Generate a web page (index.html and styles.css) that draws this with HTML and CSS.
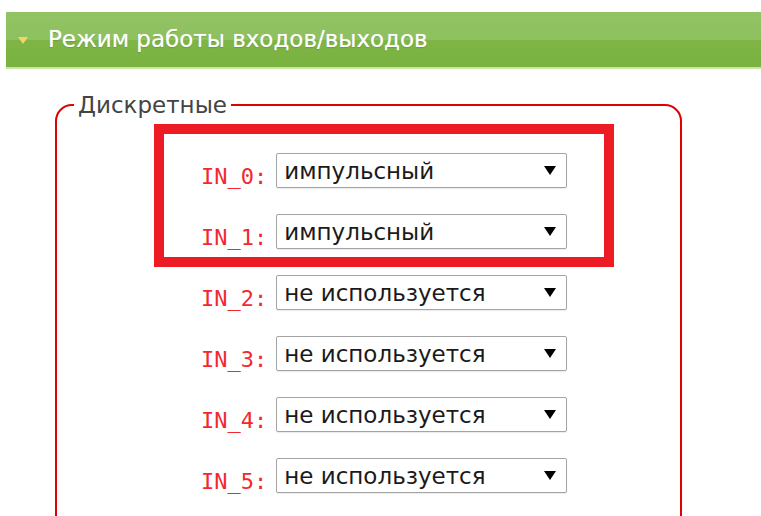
FILE: index.html
```html
<!DOCTYPE html>
<html lang="ru">
<head>
<meta charset="utf-8">
<title>Режим работы входов/выходов</title>
<link rel="stylesheet" href="styles.css">
</head>
<body>
<div class="panel-head">
  <span class="caret"></span>
  <h2 class="panel-title">Режим работы входов/выходов</h2>
</div>

<fieldset class="group">
  <legend class="group-title">Дискретные</legend>
  <div class="inputs">
    <div class="row">
      <label class="pin" for="in0">IN_0:</label>
      <span class="select"><select id="in0"><option>не используется</option><option selected>импульсный</option></select></span>
    </div>
    <div class="row">
      <label class="pin" for="in1">IN_1:</label>
      <span class="select"><select id="in1"><option>не используется</option><option selected>импульсный</option></select></span>
    </div>
    <div class="row">
      <label class="pin" for="in2">IN_2:</label>
      <span class="select"><select id="in2"><option selected>не используется</option><option>импульсный</option></select></span>
    </div>
    <div class="row">
      <label class="pin" for="in3">IN_3:</label>
      <span class="select"><select id="in3"><option selected>не используется</option><option>импульсный</option></select></span>
    </div>
    <div class="row">
      <label class="pin" for="in4">IN_4:</label>
      <span class="select"><select id="in4"><option selected>не используется</option><option>импульсный</option></select></span>
    </div>
    <div class="row">
      <label class="pin" for="in5">IN_5:</label>
      <span class="select"><select id="in5"><option selected>не используется</option><option>импульсный</option></select></span>
    </div>
    <div class="mark"></div>
  </div>
</fieldset>
</body>
</html>
```

FILE: styles.css
```css
html, body {
  margin: 0;
  background: #fff;
  font-family: "DejaVu Sans", Verdana, sans-serif;
}

/* green section header */
.panel-head {
  margin: 12px 0 0 6px;
  height: 55px;
  padding-left: 12px;
  display: flex;
  align-items: center;
  gap: 20px;
  background: linear-gradient(#93c365 0%, #8dc05e 50%, #7eb545 50%, #7ab240 100%);
  border-bottom: 2px solid #c9e6aa;
}

.caret {
  width: 0;
  height: 0;
  margin-top: 2px;
  border-left: 5px solid transparent;
  border-right: 5px solid transparent;
  border-top: 7px solid #f5d36a;
}

.panel-title {
  margin: 0 0 2px;
  font-size: 23px;
  font-weight: normal;
  color: #fff;
  text-shadow: 0 0 1px rgba(255, 255, 255, 0.6), 0 1px 1px rgba(40, 80, 10, 0.3);
}

/* rounded group box */
.group {
  margin: 23px 0 0 55px;
  width: 627px;
  box-sizing: border-box;
  border: 2px solid #e00000;
  border-radius: 17px;
  padding: 35px 0 60px;
}

.group-title {
  margin-left: 17px;
  padding: 0 4px;
  font-size: 23px;
  line-height: 26px;
  color: #444;
}

.inputs {
  position: relative;
  display: flex;
  flex-direction: column;
  gap: 26px;
}

.row {
  display: flex;
  align-items: flex-end;
  padding-left: 144px;
}

.pin {
  margin-right: 9px;
  font-family: "DejaVu Sans Mono", monospace;
  font-size: 22px;
  line-height: 22px;
  color: #f2282e;
}

.select {
  position: relative;
  display: block;
}

.select select {
  appearance: none;
  -webkit-appearance: none;
  display: block;
  width: 291px;
  height: 35px;
  box-sizing: border-box;
  margin: 0;
  padding: 0 0 0 7px;
  border: 1px solid #a4a4a4;
  border-radius: 2px;
  background: #fff;
  box-shadow: 0 1px 1px rgba(0, 0, 0, 0.08);
  font-family: "DejaVu Sans", Verdana, sans-serif;
  font-size: 23px;
  color: #1a1a1a;
}

/* dropdown arrow */
.select::after {
  content: "";
  position: absolute;
  right: 11px;
  top: 13px;
  border-left: 6px solid transparent;
  border-right: 6px solid transparent;
  border-top: 9px solid #000;
  pointer-events: none;
}

/* emphasis frame around the first two inputs */
.mark {
  position: absolute;
  left: 97px;
  top: -29px;
  width: 460px;
  height: 143px;
  box-sizing: border-box;
  border: 10px solid #ed1c24;
  pointer-events: none;
}
```
